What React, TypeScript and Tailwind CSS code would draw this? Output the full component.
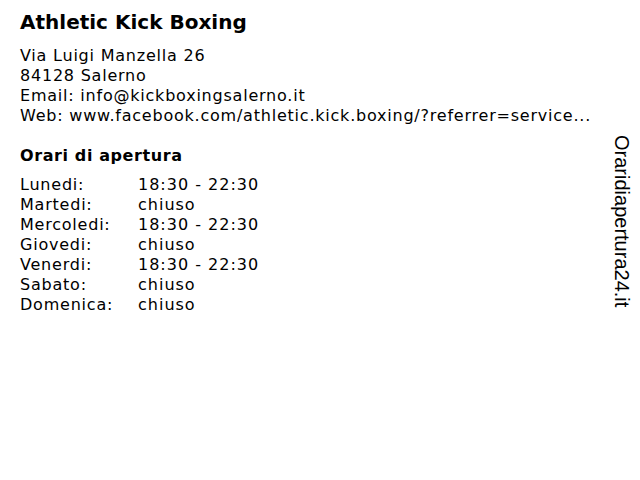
import React from "react";

const hours: [string, string][] = [
  ["Lunedi:", "18:30 - 22:30"],
  ["Martedi:", "chiuso"],
  ["Mercoledi:", "18:30 - 22:30"],
  ["Giovedi:", "chiuso"],
  ["Venerdi:", "18:30 - 22:30"],
  ["Sabato:", "chiuso"],
  ["Domenica:", "chiuso"],
];

export default function App() {
  return (
    <div className="w-[640px] h-[480px] bg-white text-black flex overflow-hidden">
      <div className="flex-1 pl-5 pt-[9px] font-['DejaVu_Sans',Verdana,sans-serif]">
        <h1 className="text-[20px] leading-[26px] font-bold">Athletic Kick Boxing</h1>
        <div className="mt-[11px] text-[16px] leading-[20px] tracking-[0.78px]">
          <div>Via Luigi Manzella 26</div>
          <div>84128 Salerno</div>
          <div>Email: info@kickboxingsalerno.it</div>
          <div>Web: www.facebook.com/athletic.kick.boxing/?referrer=service...</div>
        </div>
        <h2 className="mt-[20px] text-[16px] leading-[20px] font-bold tracking-[0.6px]">Orari di apertura</h2>
        <div className="mt-[9px] text-[16px] leading-[20px] tracking-[0.78px]">
          {hours.map(([d, t]) => (
            <div key={d} className="flex">
              <div className="w-[118px]">{d}</div>
              <div className="tracking-[1px]">{t}</div>
            </div>
          ))}
        </div>
      </div>
      <div className="w-[36px] pt-[135px] flex justify-center">
        <div className="[writing-mode:vertical-rl] text-[20px] leading-[22px] font-['Liberation_Sans',Arial,sans-serif]">
          Oraridiapertura24.it
        </div>
      </div>
    </div>
  );
}
